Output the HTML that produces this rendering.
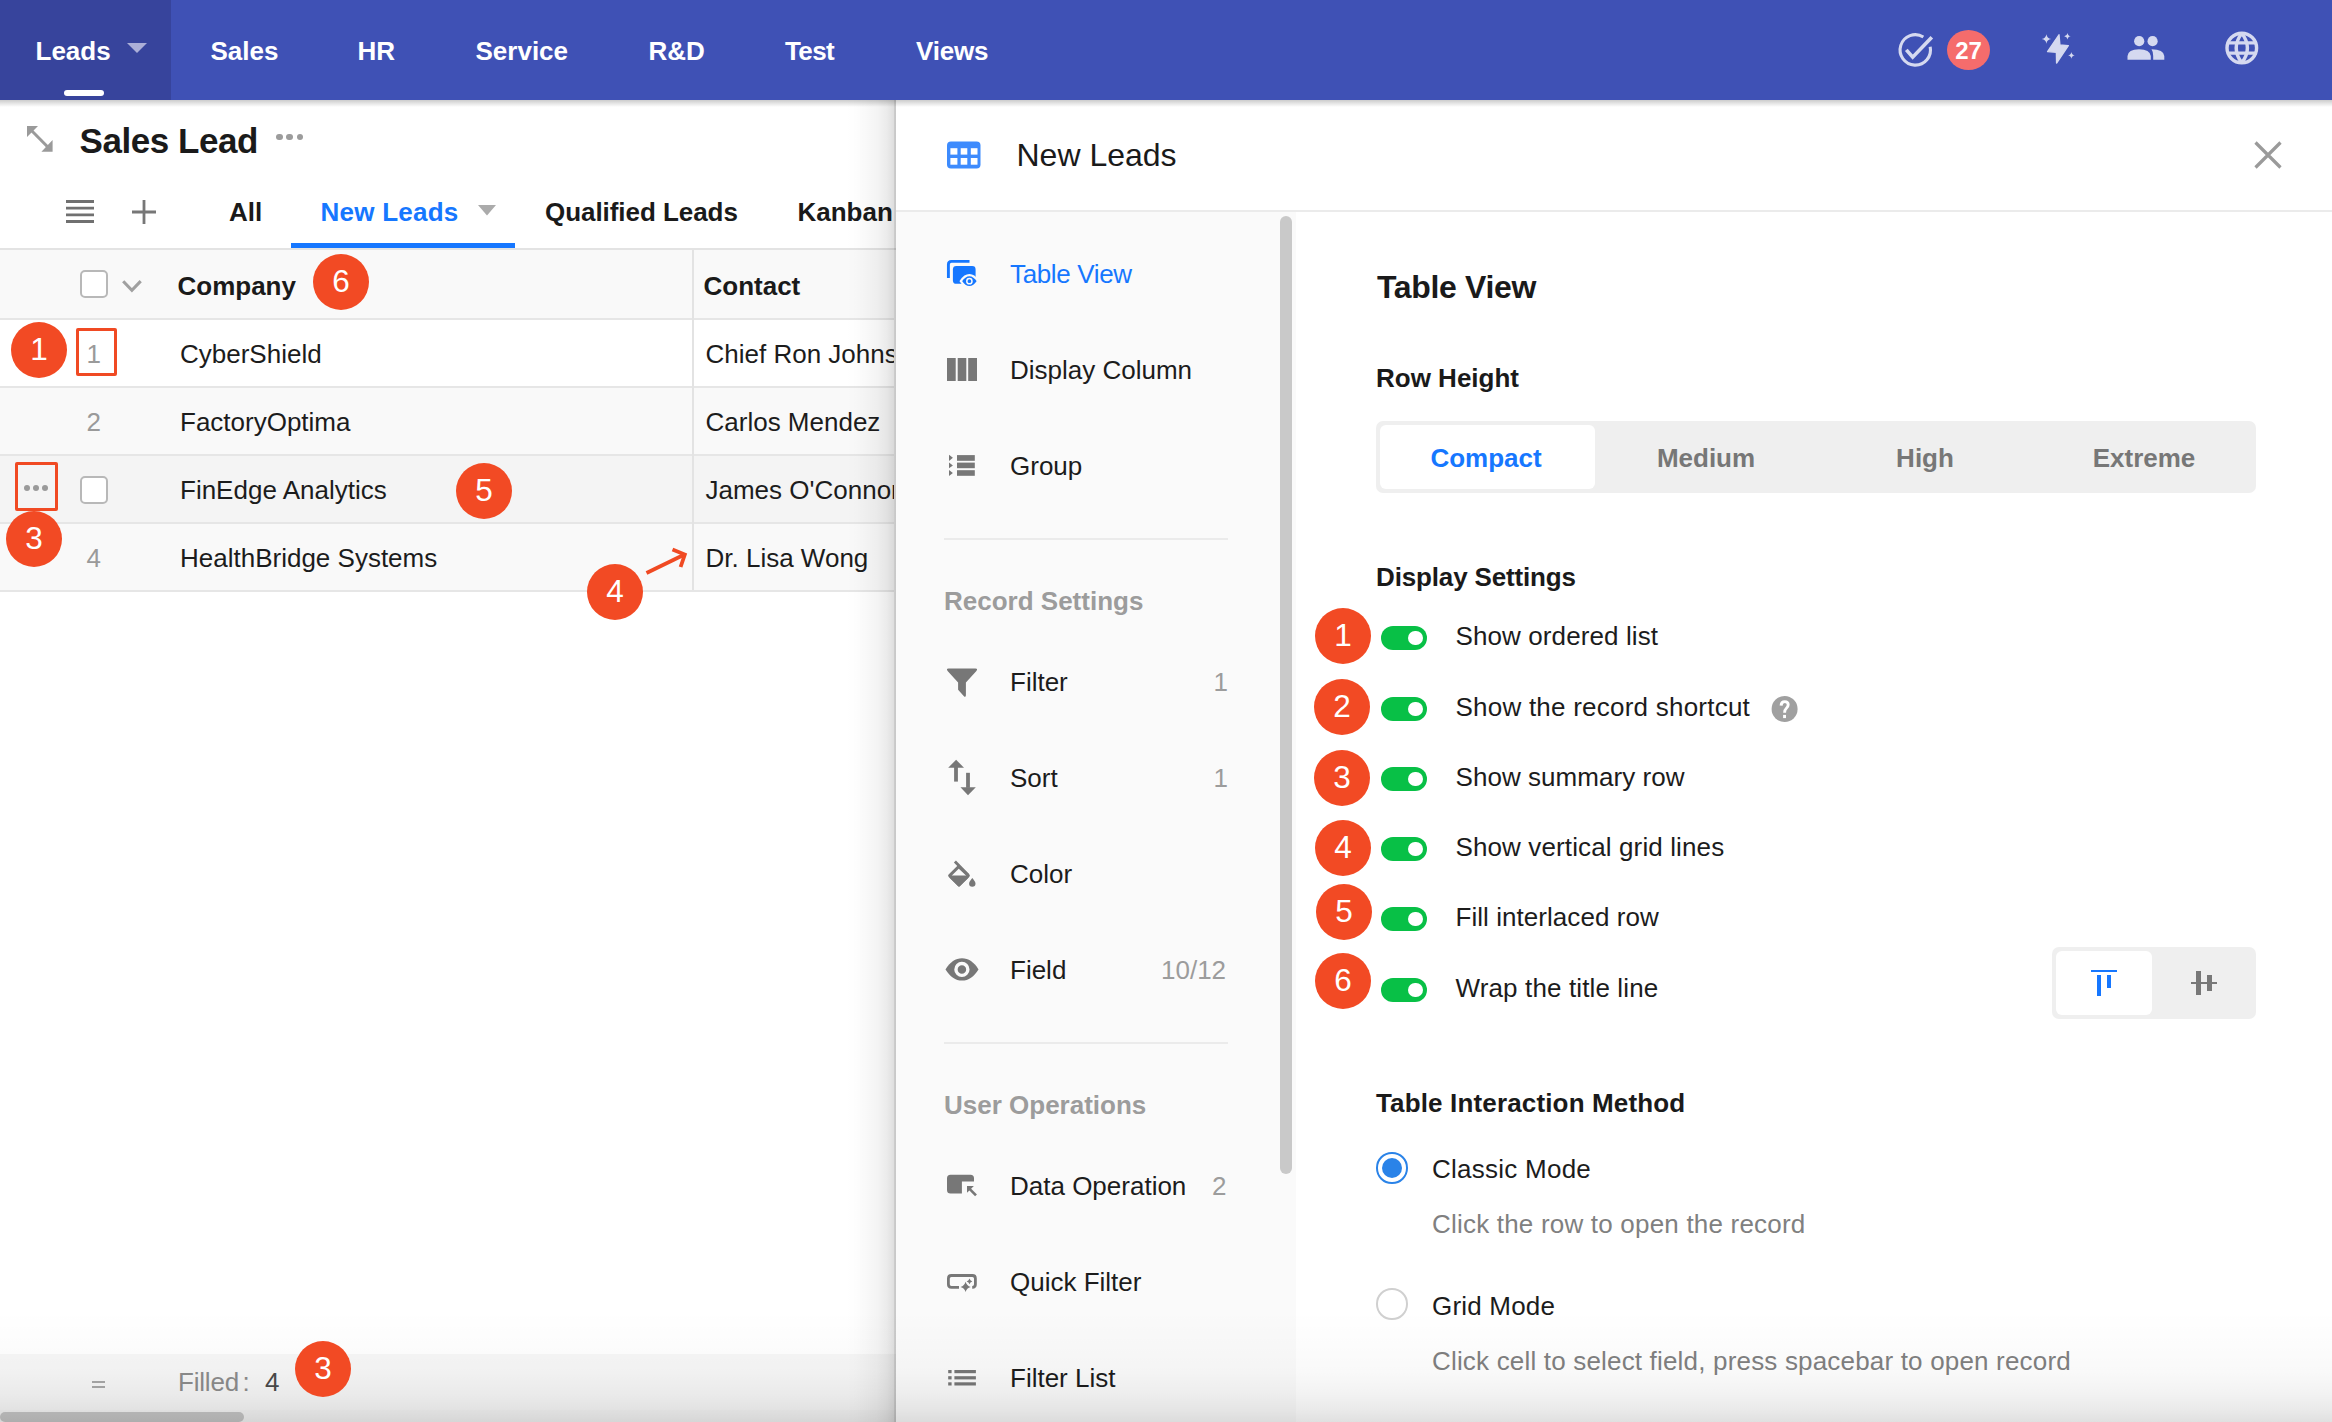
<!DOCTYPE html>
<html><head><meta charset="utf-8"><style>
html,body{margin:0;padding:0;width:2332px;height:1422px;overflow:hidden;background:#fff}
body{position:relative;font-family:"Liberation Sans",sans-serif}
.t{position:absolute;line-height:1;white-space:nowrap}
.bd{position:absolute;border-radius:50%;background:#F24A24;color:#fff;text-align:center;font-weight:400}
</style></head><body>
<div style="position:absolute;left:0px;top:0px;width:2332px;height:100px;background:#3F51B5"></div>
<div style="position:absolute;left:0px;top:0px;width:171px;height:100px;background:#37449C"></div>
<div style="position:absolute;left:64px;top:90px;width:40px;height:6px;background:#fff;border-radius:3px"></div>
<div class="t" style="left:35.5px;top:37.99px;font-size:26px;font-weight:700;color:#fff;">Leads</div>
<div class="t" style="left:210.5px;top:37.99px;font-size:26px;font-weight:700;color:#fff;">Sales</div>
<div class="t" style="left:357.5px;top:37.99px;font-size:26px;font-weight:700;color:#fff;">HR</div>
<div class="t" style="left:475.5px;top:37.99px;font-size:26px;font-weight:700;color:#fff;">Service</div>
<div class="t" style="left:648.5px;top:37.99px;font-size:26px;font-weight:700;color:#fff;">R&amp;D</div>
<div class="t" style="left:785.0px;top:37.99px;font-size:26px;font-weight:700;color:#fff;letter-spacing:-0.6px">Test</div>
<div class="t" style="left:916.0px;top:37.99px;font-size:26px;font-weight:700;color:#fff;letter-spacing:-0.2px">Views</div>
<svg style="position:absolute;left:127px;top:43px" width="20" height="11"><path d="M0 0 L20 0 L10 10 Z" fill="#ABAFD8"/></svg>
<svg style="position:absolute;left:1890px;top:28px" width="50" height="45" viewBox="1890 28 50 45">
<path d="M1930.17 46.74 A15.2 15.2 0 1 1 1923.35 37.01" fill="none" stroke="#D5D9F0" stroke-width="3.1"/>
<path d="M1906.3 49.9 L1912.7 57.2 L1931.8 37.2" fill="none" stroke="#D5D9F0" stroke-width="3.6"/>
</svg>
<div style="position:absolute;left:1947px;top:30px;width:43px;height:40px;border-radius:50%;background:#F56C6C;color:#fff;font-weight:700;font-size:24px;line-height:42px;text-align:center">27</div>
<svg style="position:absolute;left:2036px;top:28px" width="44" height="40" viewBox="2036 28 44 40">
<path d="M2059 34.8 L2047.6 51.6 L2056.4 52.3 L2056.6 63 L2068.3 45.6 L2059.9 45 Z" fill="#D5D9F0" stroke="#D5D9F0" stroke-width="1.4" stroke-linejoin="round"/>
<path d="M2046.4 34.3 Q2046.96 38.44 2051.1 39 Q2046.96 39.56 2046.4 43.7 Q2045.84 39.56 2041.7 39 Q2045.84 38.44 2046.4 34.3Z" fill="#D5D9F0"/>
<path d="M2067.5 33.0 Q2067.90 35.90 2070.8 36.3 Q2067.90 36.70 2067.5 39.599999999999994 Q2067.10 36.70 2064.2 36.3 Q2067.10 35.90 2067.5 33.0Z" fill="#D5D9F0"/>
<path d="M2071.4 52.1 Q2071.80 55.00 2074.7000000000003 55.4 Q2071.80 55.80 2071.4 58.699999999999996 Q2071.00 55.80 2068.1 55.4 Q2071.00 55.00 2071.4 52.1Z" fill="#D5D9F0"/>
</svg>
<svg style="position:absolute;left:2125px;top:33px" width="42" height="30" viewBox="0 0 42 30">
<circle cx="14.2" cy="8.2" r="5.1" fill="#D5D9F0"/>
<circle cx="27.6" cy="8.2" r="5.1" fill="#D5D9F0"/>
<path d="M2.5 26.8 L2.5 23 Q3 16.4 14 16.2 Q25 16.4 25.8 23 L25.8 26.8 Z" fill="#D5D9F0"/>
<path d="M26.5 16.2 Q38.8 16.4 39.3 23 L39.3 26.8 L28.2 26.8 L28.2 23 Q28.2 18.5 26.5 16.2Z" fill="#D5D9F0"/>
</svg>
<svg style="position:absolute;left:2220px;top:26px" width="44" height="44" viewBox="2220 26 44 44">
<g fill="none" stroke="#D5D9F0" stroke-width="3.4">
<circle cx="2241.8" cy="48" r="14.8"/>
<path d="M2227 42.9 H2256.6 M2227 53.1 H2256.6" stroke-width="3.2"/>
<path d="M2241.8 33.2 Q2230.6 48 2241.8 62.8 M2241.8 33.2 Q2253 48 2241.8 62.8"/>
</g></svg>
<svg style="position:absolute;left:26px;top:125px" width="28" height="28" viewBox="0 0 28 28">
<path d="M1 1 L12 1 L1 12Z M26.6 26.8 L15.4 26.8 L26.6 15Z" fill="#9A9A9A"/>
<path d="M4 4 L23.5 23.8" stroke="#9A9A9A" stroke-width="3"/>
</svg>
<div class="t" style="left:79.5px;top:122.87px;font-size:35px;font-weight:700;color:#1a1a1a;letter-spacing:-0.45px">Sales Lead</div>
<div style="position:absolute;left:276.2px;top:133.6px;width:6.6px;height:6.6px;background:#9C9C9C;border-radius:50%"></div>
<div style="position:absolute;left:286.4px;top:133.6px;width:6.6px;height:6.6px;background:#9C9C9C;border-radius:50%"></div>
<div style="position:absolute;left:296.59999999999997px;top:133.6px;width:6.6px;height:6.6px;background:#9C9C9C;border-radius:50%"></div>
<svg style="position:absolute;left:66px;top:200px" width="28" height="24" viewBox="0 0 28 24"><path d="M0 1.5H28M0 8.2H28M0 14.8H28M0 21.5H28" stroke="#707070" stroke-width="2.8"/></svg>
<svg style="position:absolute;left:132px;top:200px" width="24" height="24" viewBox="0 0 24 24"><path d="M12 0V24M0 12H24" stroke="#777" stroke-width="2.8"/></svg>
<div class="t" style="left:229px;top:199.29px;font-size:26px;font-weight:700;color:#1a1a1a;">All</div>
<div class="t" style="left:320.5px;top:199.29px;font-size:26px;font-weight:700;color:#1677FF;letter-spacing:0.25px">New Leads</div>
<svg style="position:absolute;left:478px;top:205px" width="18" height="11"><path d="M0 0 L18 0 L9 10.5 Z" fill="#ABABAB"/></svg>
<div class="t" style="left:545px;top:199.29px;font-size:26px;font-weight:700;color:#1a1a1a;letter-spacing:-0.05px">Qualified Leads</div>
<div class="t" style="left:797.5px;top:199.29px;font-size:26px;font-weight:700;color:#1a1a1a;">Kanban</div>
<div style="position:absolute;left:291px;top:243px;width:224px;height:5px;background:#1677FF"></div>
<div style="position:absolute;left:0px;top:248px;width:896px;height:2px;background:#E3E3E3"></div>
<div style="position:absolute;left:0;top:0;width:894px;height:1422px;overflow:hidden">
<div style="position:absolute;left:0px;top:250px;width:896px;height:68px;background:#F9F9F9"></div>
<div style="position:absolute;left:0px;top:318px;width:896px;height:2px;background:#E6E6E6"></div>
<div style="position:absolute;left:80.3px;top:270px;width:27.5px;height:27.7px;box-sizing:border-box;border:2px solid #B8B8B8;border-radius:5px;background:#fff"></div>
<svg style="position:absolute;left:118px;top:276px" width="28" height="20" viewBox="118 276 28 20"><path d="M123.2 281.2 L131.9 290.3 L140.7 281.2" fill="none" stroke="#A0A0A0" stroke-width="3.1"/></svg>
<div class="t" style="left:177.5px;top:273.09px;font-size:26px;font-weight:700;color:#1a1a1a;">Company</div>
<div class="t" style="left:703.5px;top:273.09px;font-size:26px;font-weight:700;color:#1a1a1a;">Contact</div>
<div style="position:absolute;left:692px;top:250px;width:2px;height:340px;background:#E6E6E6"></div>
<div style="position:absolute;left:0px;top:320px;width:896px;height:66px;background:#FFFFFF"></div>
<div style="position:absolute;left:0px;top:386px;width:896px;height:2px;background:#E6E6E6"></div>
<div class="t" style="left:86.5px;top:341.19px;font-size:26px;font-weight:400;color:#9A9A9A;">1</div>
<div class="t" style="left:180px;top:341.19px;font-size:26px;font-weight:400;color:#1c1c1c;">CyberShield</div>
<div class="t" style="left:705.5px;top:341.19px;font-size:26px;font-weight:400;color:#1c1c1c;">Chief Ron Johnson</div>
<div style="position:absolute;left:0px;top:388px;width:896px;height:66px;background:#F9F9F9"></div>
<div style="position:absolute;left:0px;top:454px;width:896px;height:2px;background:#E6E6E6"></div>
<div class="t" style="left:86.5px;top:409.19px;font-size:26px;font-weight:400;color:#9A9A9A;">2</div>
<div class="t" style="left:180px;top:409.19px;font-size:26px;font-weight:400;color:#1c1c1c;">FactoryOptima</div>
<div class="t" style="left:705.5px;top:409.19px;font-size:26px;font-weight:400;color:#1c1c1c;">Carlos Mendez</div>
<div style="position:absolute;left:0px;top:456px;width:896px;height:66px;background:#F4F4F4"></div>
<div style="position:absolute;left:0px;top:522px;width:896px;height:2px;background:#E6E6E6"></div>
<div class="t" style="left:180px;top:477.19px;font-size:26px;font-weight:400;color:#1c1c1c;">FinEdge Analytics</div>
<div class="t" style="left:705.5px;top:477.19px;font-size:26px;font-weight:400;color:#1c1c1c;">James O'Connor</div>
<div style="position:absolute;left:0px;top:524px;width:896px;height:66px;background:#F9F9F9"></div>
<div style="position:absolute;left:0px;top:590px;width:896px;height:2px;background:#E6E6E6"></div>
<div class="t" style="left:86.5px;top:545.19px;font-size:26px;font-weight:400;color:#9A9A9A;">4</div>
<div class="t" style="left:180px;top:545.19px;font-size:26px;font-weight:400;color:#1c1c1c;">HealthBridge Systems</div>
<div class="t" style="left:705.5px;top:545.19px;font-size:26px;font-weight:400;color:#1c1c1c;">Dr. Lisa Wong</div>
<div style="position:absolute;left:692px;top:250px;width:2px;height:340px;background:#E3E3E3"></div>
</div>
<div style="position:absolute;left:80.3px;top:476.2px;width:27.5px;height:27.5px;box-sizing:border-box;border:2px solid #B8B8B8;border-radius:5px;background:#fff"></div>
<div style="position:absolute;left:23.6px;top:485px;width:6px;height:6px;background:#9A9A9A;border-radius:50%"></div>
<div style="position:absolute;left:33px;top:485px;width:6px;height:6px;background:#9A9A9A;border-radius:50%"></div>
<div style="position:absolute;left:42px;top:485px;width:6px;height:6px;background:#9A9A9A;border-radius:50%"></div>
<div style="position:absolute;left:76px;top:328px;width:41px;height:48px;box-sizing:border-box;border:3px solid #F04A23;border-radius:2px"></div>
<div style="position:absolute;left:15px;top:462px;width:43px;height:49px;box-sizing:border-box;border:3px solid #F04A23;border-radius:2px"></div>
<svg style="position:absolute;left:640px;top:540px" width="52" height="40" viewBox="640 540 52 40">
<path d="M646.5 573 L683.5 555" stroke="#F04A23" stroke-width="3.8" fill="none"/>
<path d="M672.5 549.5 L684.8 554.6 L680.6 567" stroke="#F04A23" stroke-width="3.8" fill="none" stroke-linejoin="miter"/>
</svg>
<div style="position:absolute;left:0px;top:1354px;width:896px;height:56px;background:#F7F7F7"></div>
<div style="position:absolute;left:0px;top:1410px;width:896px;height:12px;background:#F4F4F4"></div>
<div style="position:absolute;left:0px;top:1412px;width:244px;height:10px;background:#C6C6C6;border-radius:5px"></div>
<div style="position:absolute;left:92px;top:1381px;width:13px;height:2px;background:#A8A8A8"></div>
<div style="position:absolute;left:92px;top:1386px;width:13px;height:2px;background:#A8A8A8"></div>
<div class="t" style="left:178px;top:1368.99px;font-size:26px;font-weight:400;color:#8C8C8C;letter-spacing:-0.2px">Filled</div>
<div class="t" style="left:242.5px;top:1368.99px;font-size:26px;font-weight:400;color:#8C8C8C;">:</div>
<div class="t" style="left:265px;top:1368.99px;font-size:26px;font-weight:400;color:#4A4A4A;">4</div>
<div style="position:absolute;left:846px;top:100px;width:50px;height:1322px;background:linear-gradient(to right,rgba(0,0,0,0) 0%,rgba(0,0,0,0.008) 20%,rgba(0,0,0,0.022) 40%,rgba(0,0,0,0.045) 62%,rgba(0,0,0,0.08) 82%,rgba(0,0,0,0.125) 95%,rgba(0,0,0,0.2) 96.5%,rgba(0,0,0,0.22) 100%)"></div>
<div style="position:absolute;left:896px;top:100px;width:1436px;height:1322px;background:#fff"></div>
<div style="position:absolute;left:896px;top:210px;width:1436px;height:2px;background:#EBEBEB"></div>
<svg style="position:absolute;left:947px;top:141px" width="34" height="28" viewBox="0 0 34 28">
<rect x="0" y="0.5" width="33.5" height="27" rx="4" fill="#3D8BFD"/>
<g fill="#fff">
<rect x="3.4" y="7.2" width="7" height="6.4"/><rect x="13.7" y="7.2" width="6.6" height="6.4"/><rect x="23.8" y="7.2" width="6.7" height="6.4"/>
<rect x="3.4" y="17" width="7" height="6.7"/><rect x="13.7" y="17" width="6.6" height="6.7"/><rect x="23.8" y="17" width="6.7" height="6.7"/>
</g></svg>
<div class="t" style="left:1016.5px;top:138.91px;font-size:32px;font-weight:400;color:#1a1a1a;">New Leads</div>
<svg style="position:absolute;left:2254px;top:141px" width="28" height="28" viewBox="0 0 28 28"><path d="M1.5 1.5 L26.5 26.5 M26.5 1.5 L1.5 26.5" stroke="#9A9A9A" stroke-width="3.2"/></svg>
<div style="position:absolute;left:896px;top:212px;width:400px;height:1210px;background:#FAFAFA"></div>
<div style="position:absolute;left:1280px;top:216px;width:12px;height:958px;background:#C9C9C9;border-radius:6px"></div>
<svg style="position:absolute;left:944px;top:256px" width="38" height="34" viewBox="944 256 38 34">
<path d="M948.4 277.9 V264.5 Q948.4 261.4 951.5 261.4 H969.5" fill="none" stroke="#1677FF" stroke-width="2.9"/>
<rect x="952.9" y="266" width="22.7" height="17.8" rx="3.4" fill="#1677FF"/>
<path d="M960.8 281.2 C963.6 277 966.5 275.2 969.4 275.2 C972.3 275.2 975.2 277 978 281.2 C975.2 285.4 972.3 287.2 969.4 287.2 C966.5 287.2 963.6 285.4 960.8 281.2Z" fill="#1677FF" stroke="#FAFAFA" stroke-width="2.2"/>
<circle cx="969.4" cy="281.2" r="2.6" fill="#1677FF" stroke="#FAFAFA" stroke-width="1.5"/>
</svg>
<div class="t" style="left:1010px;top:261.19px;font-size:26px;font-weight:400;color:#1677FF;letter-spacing:-0.35px">Table View</div>
<svg style="position:absolute;left:947px;top:358px" width="30" height="23"><rect x="0" y="0" width="8.7" height="23" fill="#777777"/><rect x="10.7" y="0" width="8.6" height="23" fill="#777777"/><rect x="21.2" y="0" width="8.8" height="23" fill="#777777"/></svg>
<div class="t" style="left:1010px;top:356.59px;font-size:26px;font-weight:400;color:#1c1c1c;">Display Column</div>
<svg style="position:absolute;left:944px;top:450px" width="36" height="30" viewBox="944 450 36 30">
<path d="M949 454.8 L952.9 457.85 L949 460.9Z M949 462.6 L952.9 465.45 L949 468.3Z M949 470 L952.9 473 L949 476Z" fill="#777777"/>
<rect x="957" y="455.1" width="17.8" height="5.7" fill="#777777"/><rect x="957" y="462.6" width="17.8" height="5.6" fill="#777777"/><rect x="957" y="470.2" width="17.8" height="5.6" fill="#777777"/>
</svg>
<div class="t" style="left:1010px;top:452.99px;font-size:26px;font-weight:400;color:#1c1c1c;">Group</div>
<div style="position:absolute;left:944px;top:538px;width:284px;height:2px;background:#EBEBEB"></div>
<div class="t" style="left:944px;top:587.99px;font-size:26px;font-weight:700;color:#9C9C9C;">Record Settings</div>
<svg style="position:absolute;left:944px;top:664px" width="36" height="36" viewBox="944 664 36 36"><path d="M948.6 668.6 H975.4 Q978.2 668.6 976.4 670.9 L965.9 682.4 V695.2 Q965.6 697.9 963.7 695.9 L958.1 689.7 V682.4 L947.6 670.9 Q945.8 668.6 948.6 668.6Z" fill="#777777"/></svg>
<div class="t" style="left:1010px;top:669.19px;font-size:26px;font-weight:400;color:#1c1c1c;">Filter</div>
<div class="t" style="left:1213.5px;top:669.19px;font-size:26px;font-weight:400;color:#9C9C9C;">1</div>
<svg style="position:absolute;left:946px;top:758px" width="32" height="40" viewBox="946 758 32 40">
<path d="M956.1 759.7 L964 767.8 L948.2 767.8Z" fill="#777777"/><rect x="954.1" y="767" width="3.8" height="14.6" fill="#777777"/>
<path d="M968 795.3 L975.8 787.2 L960.5 787.2Z" fill="#777777"/><rect x="966.1" y="772.8" width="3.8" height="15" fill="#777777"/>
</svg>
<div class="t" style="left:1010px;top:765.19px;font-size:26px;font-weight:400;color:#1c1c1c;">Sort</div>
<div class="t" style="left:1213.5px;top:765.19px;font-size:26px;font-weight:400;color:#9C9C9C;">1</div>
<svg style="position:absolute;left:944px;top:856px" width="36" height="34" viewBox="944 856 36 34">
<path d="M954.9 861.4 L968.3 875.2" stroke="#777777" stroke-width="2.9"/>
<path d="M958.7 866.6 L968.4 875.6 L959 885 L949.6 875.6 Z" fill="none" stroke="#777777" stroke-width="2.9" stroke-linejoin="round"/>
<path d="M950.9 876.9 L967.1 876.9 L959 885 Z" fill="#777777" stroke="#777777" stroke-width="2.9" stroke-linejoin="round"/>
<path d="M972.3 878 C973.5 879.7 975.5 881.5 975.5 883.5 A3.2 3.2 0 0 1 969.1 883.5 C969.1 881.5 971.1 879.7 972.3 878Z" fill="#777777"/>
</svg>
<div class="t" style="left:1010px;top:861.19px;font-size:26px;font-weight:400;color:#1c1c1c;">Color</div>
<svg style="position:absolute;left:943px;top:955px" width="38" height="29" viewBox="943 955 38 29">
<path d="M945.5 969.4 C950 962 955.5 958.2 962 958.2 C968.5 958.2 974 962 978.5 969.4 C974 976.8 968.5 980.6 962 980.6 C955.5 980.6 950 976.8 945.5 969.4Z" fill="#777777"/>
<circle cx="961.9" cy="969.4" r="5.95" fill="none" stroke="#FAFAFA" stroke-width="3.4"/>
</svg>
<div class="t" style="left:1010px;top:957.19px;font-size:26px;font-weight:400;color:#1c1c1c;">Field</div>
<div class="t" style="left:1161px;top:957.19px;font-size:26px;font-weight:400;color:#9C9C9C;">10/12</div>
<div style="position:absolute;left:944px;top:1042px;width:284px;height:2px;background:#EBEBEB"></div>
<div class="t" style="left:944px;top:1091.99px;font-size:26px;font-weight:700;color:#9C9C9C;">User Operations</div>
<svg style="position:absolute;left:944px;top:1170px" width="36" height="30" viewBox="944 1170 36 30">
<path d="M950.5 1174.8 H970.5 Q974 1174.8 974 1178.3 V1181.6 H961.9 V1193.4 H950.5 Q947 1193.4 947 1189.9 V1178.3 Q947 1174.8 950.5 1174.8Z" fill="#777777"/>
<path d="M967 1186 L973.9 1186 L967 1192.8Z" fill="#777777"/>
<path d="M969.3 1188.6 L976 1195.4" stroke="#777777" stroke-width="2.6"/>
</svg>
<div class="t" style="left:1010px;top:1173.19px;font-size:26px;font-weight:400;color:#1c1c1c;">Data Operation</div>
<div class="t" style="left:1212px;top:1173.19px;font-size:26px;font-weight:400;color:#9C9C9C;">2</div>
<svg style="position:absolute;left:944px;top:1268px" width="36" height="28" viewBox="944 1268 36 28">
<path d="M959 1287.3 H951.4 Q948.4 1287.3 948.4 1284.3 V1278.5 Q948.4 1275.5 951.4 1275.5 H972.4 Q975.4 1275.5 975.4 1278.5 V1284.3 Q975.4 1287.3 972.4 1287.3 H972.2" fill="none" stroke="#777777" stroke-width="2.8"/>
<path d="M965.6 1281.8000000000002 Q966.62 1285.88 970.7 1286.9 Q966.62 1287.92 965.6 1292.0 Q964.58 1287.92 960.5 1286.9 Q964.58 1285.88 965.6 1281.8000000000002Z" fill="#777777"/>
<path d="M969.5 1278.6000000000001 Q970.06 1280.84 972.3 1281.4 Q970.06 1281.96 969.5 1284.2 Q968.94 1281.96 966.7 1281.4 Q968.94 1280.84 969.5 1278.6000000000001Z" fill="#777777"/>
</svg>
<div class="t" style="left:1010px;top:1269.19px;font-size:26px;font-weight:400;color:#1c1c1c;">Quick Filter</div>
<svg style="position:absolute;left:948px;top:1369px" width="29" height="18" viewBox="948 1369 29 18">
<rect x="948.2" y="1370" width="3.4" height="3.2" fill="#777777"/><rect x="954.4" y="1370" width="21.5" height="3.2" fill="#777777"/>
<rect x="948.2" y="1376.2" width="3.4" height="3.2" fill="#777777"/><rect x="954.4" y="1376.2" width="21.5" height="3.2" fill="#777777"/>
<rect x="948.2" y="1382.3" width="3.4" height="3.2" fill="#777777"/><rect x="954.4" y="1382.3" width="21.5" height="3.2" fill="#777777"/>
</svg>
<div class="t" style="left:1010px;top:1365.19px;font-size:26px;font-weight:400;color:#1c1c1c;">Filter List</div>
<div class="t" style="left:1377px;top:271.11px;font-size:32px;font-weight:700;color:#1a1a1a;letter-spacing:-0.35px">Table View</div>
<div class="t" style="left:1376px;top:365.09px;font-size:26px;font-weight:700;color:#1a1a1a;">Row Height</div>
<div style="position:absolute;left:1376px;top:421px;width:880px;height:72px;background:#EFEFEF;border-radius:7px"></div>
<div style="position:absolute;left:1380px;top:425px;width:215px;height:64px;background:#fff;border-radius:6px"></div>
<div class="t" style="left:1376px;width:220px;text-align:center;top:444.59px;font-size:26px;font-weight:700;color:#1677FF">Compact</div>
<div class="t" style="left:1596px;width:220px;text-align:center;top:444.59px;font-size:26px;font-weight:700;color:#777">Medium</div>
<div class="t" style="left:1815px;width:220px;text-align:center;top:444.59px;font-size:26px;font-weight:700;color:#777">High</div>
<div class="t" style="left:2034px;width:220px;text-align:center;top:444.59px;font-size:26px;font-weight:700;color:#777">Extreme</div>
<div class="t" style="left:1376px;top:564.49px;font-size:26px;font-weight:700;color:#1a1a1a;letter-spacing:-0.15px">Display Settings</div>
<div style="position:absolute;left:1380.5px;top:626.4px;width:46.5px;height:23.2px;background:#08C046;border-radius:12px"></div>
<div style="position:absolute;left:1408.3px;top:630.6px;width:14.8px;height:14.8px;background:#fff;border-radius:50%"></div>
<div class="t" style="left:1455.5px;top:622.99px;font-size:26px;font-weight:400;color:#1c1c1c;letter-spacing:0.10px">Show ordered list</div>
<div style="position:absolute;left:1380.5px;top:697.4px;width:46.5px;height:23.2px;background:#08C046;border-radius:12px"></div>
<div style="position:absolute;left:1408.3px;top:701.6px;width:14.8px;height:14.8px;background:#fff;border-radius:50%"></div>
<div class="t" style="left:1455.5px;top:693.99px;font-size:26px;font-weight:400;color:#1c1c1c;letter-spacing:0.23px">Show the record shortcut</div>
<div style="position:absolute;left:1380.5px;top:767.4px;width:46.5px;height:23.2px;background:#08C046;border-radius:12px"></div>
<div style="position:absolute;left:1408.3px;top:771.6px;width:14.8px;height:14.8px;background:#fff;border-radius:50%"></div>
<div class="t" style="left:1455.5px;top:763.99px;font-size:26px;font-weight:400;color:#1c1c1c;letter-spacing:0.05px">Show summary row</div>
<div style="position:absolute;left:1380.5px;top:837.4px;width:46.5px;height:23.2px;background:#08C046;border-radius:12px"></div>
<div style="position:absolute;left:1408.3px;top:841.6px;width:14.8px;height:14.8px;background:#fff;border-radius:50%"></div>
<div class="t" style="left:1455.5px;top:833.99px;font-size:26px;font-weight:400;color:#1c1c1c;letter-spacing:0.12px">Show vertical grid lines</div>
<div style="position:absolute;left:1380.5px;top:907.4px;width:46.5px;height:23.2px;background:#08C046;border-radius:12px"></div>
<div style="position:absolute;left:1408.3px;top:911.6px;width:14.8px;height:14.8px;background:#fff;border-radius:50%"></div>
<div class="t" style="left:1455.5px;top:903.99px;font-size:26px;font-weight:400;color:#1c1c1c;letter-spacing:0.05px">Fill interlaced row</div>
<div style="position:absolute;left:1380.5px;top:978.4px;width:46.5px;height:23.2px;background:#08C046;border-radius:12px"></div>
<div style="position:absolute;left:1408.3px;top:982.6px;width:14.8px;height:14.8px;background:#fff;border-radius:50%"></div>
<div class="t" style="left:1455.5px;top:974.99px;font-size:26px;font-weight:400;color:#1c1c1c;letter-spacing:0.13px">Wrap the title line</div>
<svg style="position:absolute;left:1770px;top:694px" width="30" height="30" viewBox="1770 694 30 30">
<circle cx="1784.6" cy="709" r="13" fill="#A0A0A0"/>
<path d="M1781.1 705.6 Q1781.2 701.6 1784.8 701.6 Q1788.2 701.6 1788.2 704.8 Q1788.2 706.8 1786.2 708.5 Q1784.6 709.9 1784.6 712.8" fill="none" stroke="#fff" stroke-width="2.9"/>
<rect x="1783.1" y="714.9" width="2.9" height="3.2" fill="#fff"/>
</svg>
<div style="position:absolute;left:2052px;top:947px;width:204px;height:72px;background:#EFEFEF;border-radius:7px"></div>
<div style="position:absolute;left:2056px;top:951px;width:96px;height:64px;background:#fff;border-radius:6px"></div>
<div style="position:absolute;left:2090.6px;top:969.5px;width:26.8px;height:2.8px;background:#1677FF"></div>
<div style="position:absolute;left:2097.3px;top:974.9px;width:3.7px;height:21.1px;background:#1677FF"></div>
<div style="position:absolute;left:2107px;top:974.9px;width:3.7px;height:13.1px;background:#1677FF"></div>
<div style="position:absolute;left:2190.6px;top:981.5px;width:26.8px;height:2.8px;background:#787878"></div>
<div style="position:absolute;left:2196px;top:970.8px;width:5.3px;height:24.1px;background:#787878"></div>
<div style="position:absolute;left:2206.6px;top:974.9px;width:5.4px;height:16px;background:#787878"></div>
<div class="t" style="left:1376px;top:1089.99px;font-size:26px;font-weight:700;color:#1a1a1a;letter-spacing:0.15px">Table Interaction Method</div>
<div style="position:absolute;left:1376.2px;top:1152px;width:31.5px;height:31.5px;box-sizing:border-box;border:2.2px solid #2A83E8;border-radius:50%"></div>
<div style="position:absolute;left:1381.9px;top:1157.7px;width:20px;height:20px;background:#2A83E8;border-radius:50%"></div>
<div class="t" style="left:1432px;top:1155.59px;font-size:26px;font-weight:400;color:#1c1c1c;letter-spacing:0.25px">Classic Mode</div>
<div class="t" style="left:1432px;top:1210.99px;font-size:26px;font-weight:400;color:#808080;letter-spacing:0.2px">Click the row to open the record</div>
<div style="position:absolute;left:1376.2px;top:1288px;width:31.5px;height:31.5px;box-sizing:border-box;border:2px solid #D0D0D0;border-radius:50%;background:#fff"></div>
<div class="t" style="left:1432px;top:1292.99px;font-size:26px;font-weight:400;color:#1c1c1c;letter-spacing:0.2px">Grid Mode</div>
<div class="t" style="left:1432px;top:1347.69px;font-size:26px;font-weight:400;color:#808080;letter-spacing:0.18px">Click cell to select field, press spacebar to open record</div>
<div style="position:absolute;left:0px;top:100px;width:2332px;height:7px;background:linear-gradient(to bottom,rgba(0,0,0,0.2),rgba(0,0,0,0))"></div>
<div style="position:absolute;left:0px;top:1310px;width:2332px;height:112px;background:linear-gradient(to bottom,rgba(0,0,0,0) 0%,rgba(0,0,0,0.01) 30%,rgba(0,0,0,0.025) 55%,rgba(0,0,0,0.05) 75%,rgba(0,0,0,0.085) 90%,rgba(0,0,0,0.12) 100%);pointer-events:none"></div>
<div class="bd" style="left:313.0px;top:254.0px;width:56px;height:56px;font-size:31.5px;line-height:55px">6</div>
<div class="bd" style="left:11.0px;top:322.0px;width:56px;height:56px;font-size:31.5px;line-height:55px">1</div>
<div class="bd" style="left:6.0px;top:511.0px;width:56px;height:56px;font-size:31.5px;line-height:55px">3</div>
<div class="bd" style="left:456.0px;top:463.0px;width:56px;height:56px;font-size:31.5px;line-height:55px">5</div>
<div class="bd" style="left:587.0px;top:564.0px;width:56px;height:56px;font-size:31.5px;line-height:55px">4</div>
<div class="bd" style="left:295.0px;top:1341.0px;width:56px;height:56px;font-size:31.5px;line-height:55px">3</div>
<div class="bd" style="left:1315.0px;top:608.0px;width:56px;height:56px;font-size:31.5px;line-height:55px">1</div>
<div class="bd" style="left:1314.0px;top:679.0px;width:56px;height:56px;font-size:31.5px;line-height:55px">2</div>
<div class="bd" style="left:1314.0px;top:750.0px;width:56px;height:56px;font-size:31.5px;line-height:55px">3</div>
<div class="bd" style="left:1315.0px;top:820.0px;width:56px;height:56px;font-size:31.5px;line-height:55px">4</div>
<div class="bd" style="left:1316.0px;top:884.0px;width:56px;height:56px;font-size:31.5px;line-height:55px">5</div>
<div class="bd" style="left:1315.0px;top:953.0px;width:56px;height:56px;font-size:31.5px;line-height:55px">6</div>
</body></html>
